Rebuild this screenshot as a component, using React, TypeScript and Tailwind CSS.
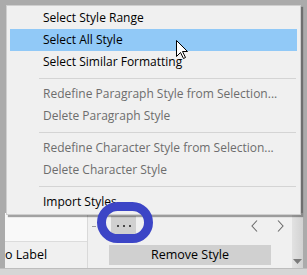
import React from "react";

const font = { fontFamily: '"Open Sans", "Noto Sans", sans-serif' };

type Item = { label: string; disabled?: boolean; active?: boolean } | "sep";

const items: Item[] = [
  { label: "Select Style Range" },
  { label: "Select All Style", active: true },
  { label: "Select Similar Formatting" },
  "sep",
  { label: "Redefine Paragraph Style from Selection...", disabled: true },
  { label: "Delete Paragraph Style", disabled: true },
  "sep",
  { label: "Redefine Character Style from Selection...", disabled: true },
  { label: "Delete Character Style", disabled: true },
  "sep",
  { label: "Import Styles" },
];

function ContextMenu() {
  return (
    <div className="absolute left-[6px] top-[5px] w-[295px] border border-[#cfcfcf] bg-[#f0f0f0] py-px shadow-[2px_2px_1px_rgba(0,0,0,0.35)]">
      {items.map((it, i) =>
        it === "sep" ? (
          <div key={i} className="flex h-[10px] items-center pl-[32px] pr-[4px]">
            <div className="h-px w-full bg-[#d4d4d4]" />
          </div>
        ) : (
          <div
            key={i}
            className={`mx-[3px] flex h-[22px] items-center whitespace-nowrap pl-[33px] text-[12px] ${
              it.active ? "bg-[#91c9f7]" : ""
            } ${it.disabled ? "text-[#6d6d6d]" : "text-[#000]"}`}
          >
            {it.label}
          </div>
        )
      )}
    </div>
  );
}

function Cursor() {
  return (
    <svg className="absolute left-[176px] top-[40px]" width="13" height="20" viewBox="0 0 13 20">
      <path
        d="M0.5 0.5 L0.5 16.5 L4.5 12.5 L7.5 18.5 L9.5 17.5 L6.5 11.5 L11.5 11.5 Z"
        fill="#fff"
        stroke="#000"
        strokeWidth="1"
      />
    </svg>
  );
}

export default function App() {
  return (
    <div className="relative flex h-[275px] w-[307px] flex-col overflow-hidden bg-[#ababab] pl-[5px] pr-[4px]" style={font}>
      <div className="h-[213px] shrink-0" />

      <div className="flex h-[55px] shrink-0">
        {/* left pane */}
        <div className="flex w-[83px] flex-col border-r border-[#d9d9d9]">
          <div className="h-[29px] border-b border-[#dcdcdc] bg-[#f9f9f9]" />
          <div className="flex flex-1 items-center overflow-hidden whitespace-nowrap bg-[#f0f0f0] text-[12.5px] text-black">
            <span>o Label</span>
          </div>
        </div>

        {/* right pane */}
        <div className="flex flex-1 flex-col bg-[#f0f0f0]">
          <div className="flex h-[26px] items-center">
            <div className="ml-[4px] h-px w-[4px] bg-[#9a9a9a]" />
            <div className="ml-[15px] flex h-[20px] w-[25px] items-center justify-center gap-[4px] bg-[#d0d0d0]">
              <span className="h-[2px] w-[2px] bg-[#4a4a4a]" />
              <span className="h-[2px] w-[2px] bg-[#4a4a4a]" />
              <span className="h-[2px] w-[2px] bg-[#4a4a4a]" />
            </div>
            <div className="ml-auto mr-[8px] flex items-center gap-[19px]">
              <svg width="7" height="12" viewBox="0 0 7 12">
                <path d="M6 0.5 L1 6 L6 11.5" fill="none" stroke="#6b6b6b" strokeWidth="1.1" />
              </svg>
              <svg width="7" height="12" viewBox="0 0 7 12">
                <path d="M1 0.5 L6 6 L1 11.5" fill="none" stroke="#6b6b6b" strokeWidth="1.1" />
              </svg>
            </div>
          </div>
          <div className="mt-[6px] ml-[21px] flex h-[20px] w-[162px] items-center justify-center bg-[#d0d0d0] text-[12.5px] text-black">
            Remove Style
          </div>
        </div>

        {/* scrollbar */}
        <div className="flex w-[11px] flex-col justify-end bg-gradient-to-r from-[#e2e2e2] to-[#d2d2d2] pb-[4px]">
          <svg width="9" height="5" viewBox="0 0 9 5" className="ml-[1px]">
            <path d="M0 0 L9 0 L4.5 5 Z" fill="#7a7a7a" />
          </svg>
        </div>
      </div>

      <div className="-ml-[5px] -mr-[4px] flex-1 border-t border-[#bdbdbd] bg-[#d6d6d6]" />

      <ContextMenu />
      <Cursor />

      {/* annotation ring */}
      <div className="absolute left-[97px] top-[202px] h-[41px] w-[56px] rounded-full border-[9px] border-[#3c45c6]" />
    </div>
  );
}
